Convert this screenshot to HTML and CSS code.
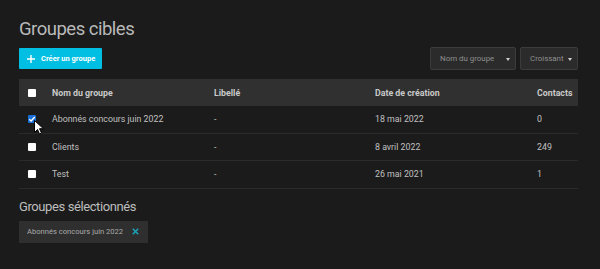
FILE: index.html
```html
<!DOCTYPE html>
<html lang="fr">
<head>
  <meta charset="UTF-8" />
  <title>Groupes cibles</title>
  <link rel="stylesheet" href="styles.css">
</head>
<body>
  <div class="page">
    <h1>Groupes cibles</h1>

    <div class="toolbar">
      <button class="btn">
        <svg width="8" height="8" viewBox="0 0 8 8"><path d="M4 0v8M0 4h8" stroke="#fff" stroke-width="1.4"/></svg>
        Créer un groupe
      </button>
      <div class="sorts">
        <div class="select wide">Nom du groupe <span class="caret"></span></div>
        <div class="select">Croissant <span class="caret"></span></div>
      </div>
    </div>

    <table class="groupes">
      <thead>
        <tr>
          <th class="col-check"><span class="box"></span></th>
          <th class="col-nom">Nom du groupe</th>
          <th class="col-lib">Libellé</th>
          <th class="col-date">Date de création</th>
          <th class="col-contacts">Contacts</th>
        </tr>
      </thead>
      <tbody>
        <tr>
          <td class="col-check">
            <span class="box checked">
              <svg width="8" height="8" viewBox="0 0 8 8"><path d="M1.3 4.2l1.8 1.7 3.6-3.9" stroke="#fff" stroke-width="1.4" fill="none"/></svg>
            </span>
            <svg class="cursor" width="10" height="15" viewBox="0 0 10 15"><path d="M0.5 0.5v12l3-3 2 4.5 2-1-2-4.3h4z" fill="#fff" stroke="#000" stroke-width="1"/></svg>
          </td>
          <td>Abonnés concours juin 2022</td>
          <td>-</td>
          <td>18 mai 2022</td>
          <td>0</td>
        </tr>
        <tr>
          <td class="col-check"><span class="box"></span></td>
          <td>Clients</td>
          <td>-</td>
          <td>8 avril 2022</td>
          <td>249</td>
        </tr>
        <tr>
          <td class="col-check"><span class="box"></span></td>
          <td>Test</td>
          <td>-</td>
          <td>26 mai 2021</td>
          <td>1</td>
        </tr>
      </tbody>
    </table>

    <h2>Groupes sélectionnés</h2>
    <div class="chip">
      Abonnés concours juin 2022
      <svg width="7" height="7" viewBox="0 0 7 7"><path d="M0.8 0.8l5.4 5.4M6.2 0.8l-5.4 5.4" stroke="#1ba3bd" stroke-width="1.5"/></svg>
    </div>
  </div>
</body>
</html>
```

FILE: styles.css
```css
body {
  margin: 0;
  background: #1b1b1b;
  font-family: Roboto, 'Liberation Sans', sans-serif;
  color: #c2c2c2;
}

.page {
  padding: 0 22px 0 19px;
}

h1 {
  margin: 0;
  padding-top: 18px;
  font-size: 18.5px;
  font-weight: 400;
  letter-spacing: -0.5px;
  line-height: 22px;
  color: #b9b9b9;
}

.toolbar {
  display: flex;
  justify-content: space-between;
  align-items: center;
  margin-top: 7px;
  height: 23px;
}

.btn {
  display: flex;
  align-items: center;
  gap: 6px;
  height: 21px;
  width: 83px;
  padding: 0 0 0 8px;
  border: none;
  border-radius: 1px;
  background: #00bfe3;
  color: #fff;
  font-family: Roboto, sans-serif;
  font-size: 7.5px;
  font-weight: 700;
}

.sorts {
  display: flex;
  gap: 4px;
}

.select {
  position: relative;
  box-sizing: border-box;
  height: 23px;
  width: 58px;
  padding: 0 0 0 9px;
  border: 1px solid #3c3c3c;
  border-radius: 2px;
  background: #2b2b2b;
  color: #8f8f8f;
  font-size: 7.9px;
  line-height: 21px;
}

.select.wide {
  width: 86px;
}

.caret {
  position: absolute;
  right: 5px;
  top: 10px;
  border-left: 2.5px solid transparent;
  border-right: 2.5px solid transparent;
  border-top: 3px solid #d0d0d0;
}

.groupes {
  width: 100%;
  margin-top: 9px;
  border-collapse: collapse;
  font-size: 8.8px;
}

.groupes th {
  height: 27px;
  padding: 0;
  background: #303030;
  color: #c9c9c9;
  font-weight: 700;
  text-align: left;
}

.groupes td {
  height: 26.5px;
  padding: 0;
  border-bottom: 1px solid #2b2b2b;
  color: #c0c0c0;
}

.col-check {
  width: 33px;
  position: relative;
}

.col-nom { width: 162px; }
.col-lib { width: 161px; }
.col-date { width: 162px; }

.box {
  display: block;
  width: 8px;
  height: 8px;
  margin-left: 9px;
  background: #fff;
  border-radius: 1px;
}

.box.checked {
  background: #1a6fd6;
}

.box svg {
  display: block;
}

.cursor {
  position: absolute;
  left: 15px;
  top: 14px;
}

h2 {
  margin: 10px 0 0;
  font-size: 13px;
  font-weight: 400;
  letter-spacing: -0.4px;
  line-height: 16px;
  color: #bdbdbd;
}

.chip {
  display: inline-flex;
  align-items: center;
  gap: 9px;
  margin-top: 6px;
  height: 22px;
  padding: 0 9px 0 8px;
  background: #2f2f2f;
  color: #a9a9a9;
  font-size: 7.6px;
}
```
